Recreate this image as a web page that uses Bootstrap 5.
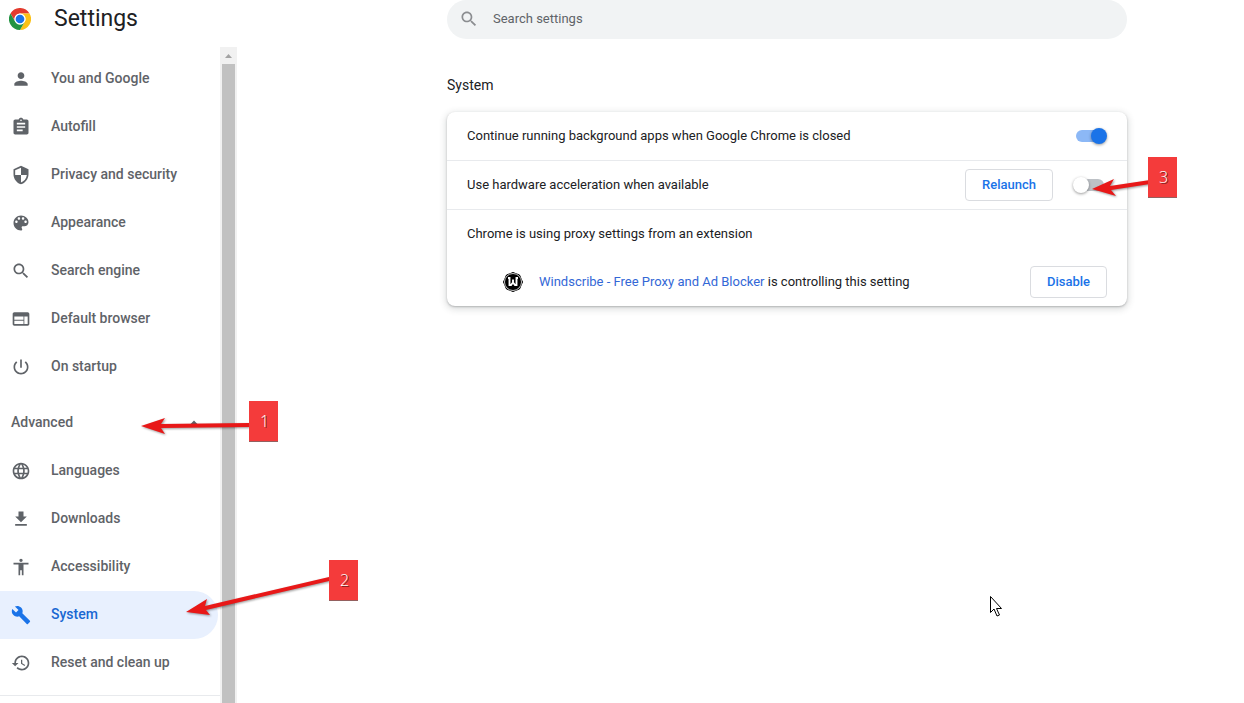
<!DOCTYPE html>
<html lang="en">
<head>
<meta charset="utf-8">
<meta name="viewport" content="width=device-width, initial-scale=1">
<title>Settings - System</title>
<link href="https://cdn.jsdelivr.net/npm/bootstrap@5.3.0/dist/css/bootstrap.min.css" rel="stylesheet">
<style>
  body { font-family: Roboto, "Liberation Sans", sans-serif; font-size: 13px; line-height: 20px; color: #202124; background: #fff; }
  svg { display: block; flex: none; }
  .sidebar { width: 237px; }
  .brand { height: 47px; padding: 0 0 9px 9px; gap: 23px; }
  .brand h1 { font-size: 23px; line-height: 32px; font-weight: 400; }
  .menu-list { padding-top: 8px; }
  .menu-list .nav-link { height: 48px; padding: 0 0 2px 11px; gap: 20px; color: #5f6368; font-size: 14px; font-weight: 500; margin-right: 2px; }
  .menu-list .nav-link svg { width: 20px; height: 20px; fill: currentColor; margin-top: 2px; }
  .menu-list .nav-link.active { background: #e8f0fe; color: #1967d2; border-radius: 0 24px 24px 0; }
  .menu-list .nav-link.active svg { fill: #1a73e8; }
  .menu-list .toggle-advanced { padding-right: 14px; }
  .menu-foot { border-top: 1px solid #e8eaed; }
  .track { width: 17px; background: #f1f1f1; }
  .track .thumb { width: 13px; background: #c1c1c1; }
  .main-area { padding-left: 93px; }
  .column { max-width: 680px; }
  .searchbox { height: 39px; background: #f1f3f4; border-radius: 20px; padding: 0 12px 2px; gap: 14px; }
  .searchbox .form-control { font-size: 13px; color: #5f6368; line-height: 20px; }
  .searchbox .form-control::placeholder { color: #5f6368; opacity: 1; }
  .section-title { font-size: 14px; line-height: 20px; font-weight: 400; margin: 36px 0 17px; }
  .settings-card { border-radius: 8px; box-shadow: 0 1px 2px rgba(60,64,67,.3), 0 2px 6px 2px rgba(60,64,67,.15); }
  .setting { height: 48px; padding: 0 20px; gap: 20px; }
  .ruled { border-top: 1px solid #e8eaed; height: 49px; }
  .extension { padding-left: 56px; gap: 16px; }
  .extension a { color: #3367d6; text-decoration: none; }
  .action { height: 32px; padding: 0 16px; font-size: 13px; line-height: 20px; font-weight: 500; color: #1a73e8; border: 1px solid #dadce0; border-radius: 4px; }
  .switch { appearance: none; width: 34px; height: 16px; margin: 0; position: relative; flex: none; }
  .switch::before { content: ""; position: absolute; inset: 2px 3px; border-radius: 6px; background: #bdc1c6; }
  .switch::after { content: ""; position: absolute; top: 0; left: 0; width: 16px; height: 16px; border-radius: 50%; background: #fff; box-shadow: 0 1px 3px rgba(0,0,0,.4); }
  .switch:checked::before { background: #8cb8f6; }
  .switch:checked::after { left: 18px; background: #1a73e8; }
  .callout { position: absolute; z-index: 5; width: 29px; height: 41px; padding-left: 2px; background: #f43b3b; border-bottom: 1px solid #93605f; color: #fff; font: 300 16px/40px "Open Sans", sans-serif; text-align: center; text-shadow: 1px 1px 0 #7a1c1c; }
  .arrow { position: absolute; z-index: 4; overflow: visible; fill: #e81818; filter: drop-shadow(1px 1px 1px rgba(0,0,0,.4)); pointer-events: none; }
  .callout-one { left: 249px; top: 401px; }
  .arrow-one { left: 141px; top: 416px; }
  .callout-two { left: 329px; top: 560px; }
  .arrow-two { left: 186px; top: 574px; }
  .callout-three { left: 701px; top: 45px; }
  .arrow-three { left: 645px; top: 68px; }
  .pointer { position: absolute; left: 990px; top: 596px; }
</style>
</head>
<body class="position-relative vh-100 overflow-hidden">
<div class="d-flex h-100">
  <aside class="sidebar flex-shrink-0 d-flex flex-column h-100">
    <header class="brand d-flex align-items-center flex-shrink-0">
      <svg width="22" height="22" viewBox="0 0 48 48" aria-hidden="true">
        <circle cx="24" cy="24" r="24" fill="#fff"/>
        <path fill="#e33b2e" d="M3.200 12A24 24 0 0 1 44.800 12H24A12 12 0 0 0 13.600 30z"/>
        <path fill="#fbc116" d="M44.800 12A24 24 0 0 1 24 48L34.400 30A12 12 0 0 0 24 12z"/>
        <path fill="#229342" d="M24 48A24 24 0 0 1 3.200 12L13.600 30A12 12 0 0 0 34.400 30z"/>
        <circle cx="24" cy="24" r="12" fill="#fff"/><circle cx="24" cy="24" r="9.500" fill="#1a73e8"/>
      </svg>
      <h1 class="m-0">Settings</h1>
    </header>
    <div class="d-flex flex-grow-1 overflow-hidden">
      <nav class="menu-list flex-grow-1" aria-label="Settings sections">
        <a class="nav-link d-flex align-items-center" href="#people"><svg viewBox="0 0 24 24"><path d="M12 12c2.210 0 4-1.790 4-4s-1.790-4-4-4-4 1.790-4 4 1.790 4 4 4zm0 2c-2.670 0-8 1.340-8 4v2h16v-2c0-2.660-5.330-4-8-4z"/></svg>You and Google</a>
        <a class="nav-link d-flex align-items-center" href="#autofill"><svg viewBox="0 0 24 24"><path d="M19 3h-4.180C14.400 1.840 13.300 1 12 1c-1.300 0-2.400.84-2.820 2H5c-1.100 0-2 .9-2 2v14c0 1.100.9 2 2 2h14c1.100 0 2-.9 2-2V5c0-1.100-.9-2-2-2zm-7 0c.55 0 1 .45 1 1s-.45 1-1 1-1-.45-1-1 .45-1 1-1zm2 14H7v-2h7v2zm3-4H7v-2h10v2zm0-4H7V7h10v2z"/></svg>Autofill</a>
        <a class="nav-link d-flex align-items-center" href="#privacy"><svg viewBox="0 0 24 24"><path d="M12 1L3 5v6c0 5.550 3.840 10.740 9 12 5.160-1.260 9-6.450 9-12V5l-9-4zm0 10.990h7c-.53 4.120-3.280 7.790-7 8.940V12H5V6.300l7-3.110v8.800z"/></svg>Privacy and security</a>
        <a class="nav-link d-flex align-items-center" href="#appearance"><svg viewBox="0 0 24 24"><path d="M12 3c-4.970 0-9 4.030-9 9s4.030 9 9 9c.83 0 1.500-.67 1.500-1.500 0-.39-.15-.74-.39-1.010-.23-.26-.38-.61-.38-.99 0-.83.67-1.500 1.500-1.500H16c2.760 0 5-2.240 5-5 0-4.420-4.030-8-9-8zm-5.500 9c-.83 0-1.500-.67-1.500-1.500S5.670 9 6.500 9 8 9.670 8 10.500 7.330 12 6.500 12zm3-4C8.670 8 8 7.330 8 6.500S8.670 5 9.500 5s1.500.67 1.500 1.500S10.330 8 9.500 8zm5 0c-.83 0-1.500-.67-1.500-1.500S13.670 5 14.500 5s1.500.67 1.500 1.500S15.330 8 14.500 8zm3 4c-.83 0-1.500-.67-1.500-1.500S16.670 9 17.500 9s1.500.67 1.500 1.500-.67 1.500-1.500 1.500z"/></svg>Appearance</a>
        <a class="nav-link d-flex align-items-center" href="#search"><svg viewBox="0 0 24 24"><path d="M15.500 14h-.79l-.28-.27C15.410 12.590 16 11.110 16 9.500 16 5.910 13.090 3 9.500 3S3 5.910 3 9.500 5.910 16 9.500 16c1.610 0 3.090-.59 4.230-1.570l.27.28v.79l5 4.990L20.490 19l-4.990-5zm-6 0C7.010 14 5 11.990 5 9.500S7.010 5 9.500 5 14 7.010 14 9.500 11.990 14 9.500 14z"/></svg>Search engine</a>
        <a class="nav-link d-flex align-items-center" href="#default"><svg viewBox="0 0 24 24"><path d="M20 4H4c-1.100 0-1.990.9-1.990 2L2 18c0 1.100.9 2 2 2h16c1.100 0 2-.9 2-2V6c0-1.100-.9-2-2-2zm-5 14H4v-4h11v4zm0-5H4V9h11v4zm5 5h-4V9h4v9z"/></svg>Default browser</a>
        <a class="nav-link d-flex align-items-center" href="#startup"><svg viewBox="0 0 24 24"><path d="M13 3h-2v10h2V3zm4.830 2.170l-1.420 1.420C17.990 7.860 19 9.810 19 12c0 3.870-3.130 7-7 7s-7-3.130-7-7c0-2.190 1.010-4.140 2.580-5.420L6.170 5.170C4.230 6.820 3 9.260 3 12c0 4.970 4.030 9 9 9s9-4.030 9-9c0-2.740-1.230-5.180-3.170-6.830z"/></svg>On startup</a>
        <a class="nav-link toggle-advanced d-flex align-items-center justify-content-between mt-2" href="#advanced" aria-expanded="true">Advanced<svg viewBox="0 0 24 24"><path d="M7 14l5-5 5 5z"/></svg></a>
        <a class="nav-link d-flex align-items-center" href="#languages"><svg viewBox="0 0 24 24"><path d="M11.990 2C6.470 2 2 6.480 2 12s4.470 10 9.990 10C17.520 22 22 17.520 22 12S17.520 2 11.990 2zm6.930 6h-2.950c-.32-1.250-.78-2.450-1.380-3.560 1.840.63 3.370 1.910 4.330 3.560zM12 4.040c.83 1.200 1.480 2.530 1.910 3.960h-3.820c.43-1.430 1.080-2.760 1.910-3.960zM4.260 14C4.100 13.360 4 12.690 4 12s.1-1.360.26-2h3.380c-.08.66-.14 1.320-.14 2s.06 1.340.14 2H4.260zm.82 2h2.950c.32 1.250.78 2.450 1.380 3.560-1.840-.63-3.370-1.900-4.330-3.560zm2.950-8H5.080c.96-1.660 2.490-2.930 4.330-3.560C8.810 5.550 8.350 6.750 8.030 8zM12 19.960c-.83-1.200-1.480-2.530-1.910-3.960h3.820c-.43 1.430-1.080 2.760-1.910 3.960zM14.340 14H9.660c-.09-.66-.16-1.320-.16-2s.07-1.350.16-2h4.680c.09.65.16 1.320.16 2s-.07 1.340-.16 2zm.25 5.560c.6-1.110 1.060-2.310 1.380-3.560h2.950c-.96 1.650-2.490 2.930-4.330 3.560zM16.360 14c.08-.66.14-1.320.14-2s-.06-1.340-.14-2h3.380c.16.64.26 1.310.26 2s-.1 1.360-.26 2h-3.380z"/></svg>Languages</a>
        <a class="nav-link d-flex align-items-center" href="#downloads"><svg viewBox="0 0 24 24"><path d="M19 9h-4V3H9v6H5l7 7 7-7zM5 18v2h14v-2H5z"/></svg>Downloads</a>
        <a class="nav-link d-flex align-items-center" href="#accessibility"><svg viewBox="0 0 24 24"><path d="M12 2c1.100 0 2 .9 2 2s-.9 2-2 2-2-.9-2-2 .9-2 2-2zm9 7h-6v13h-2v-6h-2v6H9V9H3V7h18v2z"/></svg>Accessibility</a>
        <a class="nav-link active d-flex align-items-center" href="#system" aria-current="page"><svg viewBox="0 0 24 24"><path d="M22.700 19l-9.100-9.100c.9-2.300.4-5-1.500-6.900-2-2-5-2.400-7.400-1.300L9 6 6 9 1.600 4.700C.4 7.100.9 10.100 2.900 12.100c1.900 1.900 4.600 2.400 6.900 1.500l9.100 9.100c.4.4 1 .4 1.400 0l2.300-2.300c.5-.4.5-1.100.1-1.400z"/></svg>System</a>
        <a class="nav-link d-flex align-items-center" href="#reset"><svg viewBox="0 0 24 24"><path d="M13 3c-4.970 0-9 4.030-9 9H1l3.890 3.890.07.14L9 12H6c0-3.870 3.130-7 7-7s7 3.130 7 7-3.130 7-7 7c-1.930 0-3.680-.79-4.940-2.060l-1.420 1.420C8.270 19.990 10.510 21 13 21c4.970 0 9-4.030 9-9s-4.030-9-9-9zm-1 5v5l4.280 2.540.72-1.210-3.500-2.080V8H12z"/></svg>Reset and clean up</a>
        <div class="menu-foot mt-2"></div>
      </nav>
      <div class="track flex-shrink-0 d-flex flex-column align-items-center" aria-hidden="true">
        <svg width="17" height="17" viewBox="0 0 17 17"><path fill="#a3a3a3" d="M5 11l3.500-4L12 11z"/></svg>
        <div class="thumb flex-grow-1"></div>
      </div>
    </div>
  </aside>

  <main class="main-area flex-grow-1">
    <div class="column mx-auto">
      <div class="searchbox d-flex align-items-center">
        <svg width="20" height="20" viewBox="0 0 24 24" fill="#8b8d90" aria-hidden="true"><path d="M15.500 14h-.79l-.28-.27C15.410 12.590 16 11.110 16 9.500 16 5.910 13.090 3 9.500 3S3 5.910 3 9.500 5.910 16 9.500 16c1.610 0 3.090-.59 4.230-1.570l.27.28v.79l5 4.990L20.490 19l-4.990-5zm-6 0C7.010 14 5 11.990 5 9.500S7.010 5 9.500 5 14 7.010 14 9.500 11.990 14 9.500 14z"/></svg>
        <input class="form-control border-0 bg-transparent shadow-none p-0" type="text" placeholder="Search settings" aria-label="Search settings">
      </div>
      <h2 class="section-title">System</h2>
      <section class="settings-card position-relative">
        <div class="setting d-flex align-items-center">
          <label class="flex-grow-1" for="background">Continue running background apps when Google Chrome is closed</label>
          <input class="switch" type="checkbox" role="switch" id="background" checked>
        </div>
        <div class="setting ruled d-flex align-items-center">
          <label class="flex-grow-1" for="hardware">Use hardware acceleration when available</label>
          <button class="btn action" type="button">Relaunch</button>
          <input class="switch" type="checkbox" role="switch" id="hardware">
        </div>
        <div class="setting ruled d-flex align-items-center">Chrome is using proxy settings from an extension</div>
        <div class="setting extension d-flex align-items-center">
          <svg width="20" height="20" viewBox="0 0 20 20" aria-hidden="true">
            <path d="M10 .5L16.500 3 19.500 10 16.500 17 10 19.500 3.500 17 .5 10 3.500 3z" fill="#000" stroke="#000" stroke-linejoin="round"/>
            <circle cx="10" cy="10" r="8.500" fill="#000" stroke="#ddd" stroke-width=".9"/>
            <path d="M5 6h1.500v7H8l2-2.500 2 2.500h1.500V6H15M10 7.500v4" fill="none" stroke="#fff" stroke-width="1.900"/>
          </svg>
          <span class="flex-grow-1"><a href="#extension">Windscribe - Free Proxy and Ad Blocker</a> is controlling this setting</span>
          <button class="btn action" type="button">Disable</button>
        </div>
        <svg class="arrow arrow-three" width="58" height="18" viewBox="0 0 58 18" aria-hidden="true"><path d="M0 9L22 -1l-4 7L58 0v4L19 10l5 6z"/></svg>
        <div class="callout callout-three">3</div>
      </section>
    </div>
  </main>
</div>

<svg class="arrow arrow-one" width="108" height="20" viewBox="0 0 108 20" aria-hidden="true"><path d="M0 10L24 2l-4 6 88-1v4l-88 1 4 6z"/></svg>
<div class="callout callout-one">1</div>
<svg class="arrow arrow-two" width="144" height="42" viewBox="0 0 144 42" aria-hidden="true"><path d="M0 38L21 25l-2 7L143 3v4L20 36l4 5z"/></svg>
<div class="callout callout-two">2</div>
<svg class="pointer" width="12" height="21" viewBox="0 0 12 21" aria-hidden="true"><path d="M.5.500v16l3.500-3.500 3 7 2.500-1-3-6.500h5z" fill="#fff" stroke="#000"/></svg>
<script src="https://cdn.jsdelivr.net/npm/bootstrap@5.3.0/dist/js/bootstrap.bundle.min.js"></script>
</body>
</html>
